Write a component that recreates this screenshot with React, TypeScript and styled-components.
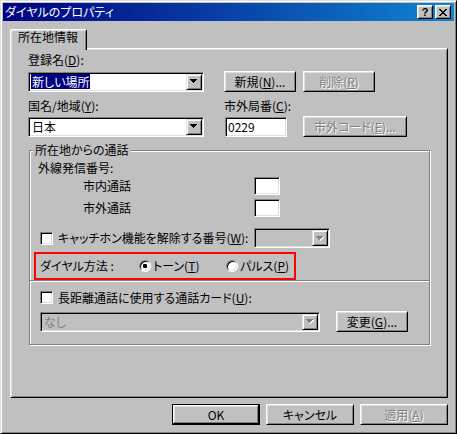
import React from 'react';
import styled, { createGlobalStyle, css } from 'styled-components';

const GlobalStyle = createGlobalStyle`
  html, body { margin: 0; padding: 0; background: #c0c0c0; }
  * { box-sizing: border-box; }
  body {
    font-family: "Noto Sans CJK JP", "Noto Sans", sans-serif;
    font-size: 12px;
    line-height: 14px;
    font-feature-settings: "palt";
  }
  u { text-decoration-thickness: 1px; text-underline-offset: 1px; }
`;

const Window = styled.div`
  width: 457px;
  height: 434px;
  background: #c0c0c0;
  border: 1px solid;
  border-color: #dfdfdf #000 #000 #dfdfdf;
  box-shadow: inset 1px 1px #fff, inset -1px -1px #808080;
  padding: 2px;
  display: flex;
  flex-direction: column;
  color: #000;
`;

const TitleBar = styled.div`
  height: 18px;
  flex: none;
  display: flex;
  align-items: center;
  padding: 0 3px 0 2px;
  background: linear-gradient(90deg, #000080 0%, #1084d0 100%);
`;

const TitleText = styled.span`
  flex: 1;
  color: #fff;
  font-size: 12px;
  line-height: 14px;
  white-space: nowrap;
`;

const CaptionButtons = styled.div`
  display: flex;
  gap: 2px;
`;

const CaptionButton = styled.div`
  width: 16px;
  height: 14px;
  background: #c0c0c0;
  border: 1px solid;
  border-color: #fff #000 #000 #fff;
  box-shadow: inset 1px 1px #dfdfdf, inset -1px -1px #808080;
  display: flex;
  align-items: center;
  justify-content: center;
  font-family: "Liberation Sans", Arial, sans-serif;
  font-weight: bold;
  font-size: 11px;
  line-height: 11px;
  color: #000;
`;

const Body = styled.div`
  flex: 1;
  display: flex;
  flex-direction: column;
  padding: 8px 6px 0 7px;
`;

const TabStrip = styled.div`
  display: flex;
`;

const Tab = styled.div`
  position: relative;
  z-index: 1;
  width: 77px;
  height: 21px;
  margin-bottom: -2px;
  background: #c0c0c0;
  border-top: 1px solid #fff;
  border-left: 1px solid #fff;
  border-right: 1px solid #000;
  border-radius: 2px 2px 0 0;
  box-shadow: inset 1px 1px #dfdfdf, inset -1px 0 #808080;
  padding: 0 0 0 7px;
  white-space: nowrap;
`;

const Panel = styled.div`
  width: 438px;
  height: 350px;
  border: 1px solid;
  border-color: #fff #000 #000 #fff;
  box-shadow: inset 1px 1px #dfdfdf, inset -1px -1px #808080;
  padding: 4px 0 0 17px;
  display: flex;
  flex-direction: column;
`;

const Row = styled.div<{ $mt?: number; $ml?: number; $h?: number; $gap?: number; $pl?: number }>`
  display: flex;
  align-items: center;
  flex: none;
  margin-top: ${(p) => p.$mt ?? 0}px;
  margin-left: ${(p) => p.$ml ?? 0}px;
  padding-left: ${(p) => p.$pl ?? 0}px;
  height: ${(p) => (p.$h ? `${p.$h}px` : 'auto')};
  gap: ${(p) => p.$gap ?? 0}px;
`;

const Label = styled.span<{ $w?: number; $disabled?: boolean }>`
  flex: none;
  white-space: nowrap;
  line-height: 14px;
  ${(p) => p.$w !== undefined && css`width: ${p.$w}px;`}
  ${(p) =>
    p.$disabled &&
    css`
      color: #808080;
      text-shadow: 1px 1px 0 #fff;
    `}
`;

const sunken = css`
  border: 1px solid;
  border-color: #808080 #fff #fff #808080;
  box-shadow: inset 1px 1px #000, inset -1px -1px #dfdfdf;
`;

const ComboBox = styled.div<{ $w: number; $disabled?: boolean }>`
  ${sunken};
  width: ${(p) => p.$w}px;
  height: 20px;
  flex: none;
  padding: 1px;
  display: flex;
  align-items: stretch;
  background: ${(p) => (p.$disabled ? '#c0c0c0' : '#fff')};
`;

const ComboValue = styled.div<{ $disabled?: boolean }>`
  flex: 1;
  display: flex;
  align-items: center;
  padding-left: 1px;
  white-space: nowrap;
  overflow: hidden;
  color: ${(p) => (p.$disabled ? '#808080' : '#000')};
`;

const Selected = styled.span`
  background: #000080;
  color: #fff;
  padding: 0 1px;
  line-height: 15px;
`;

const Plain = styled.span`
  padding: 0 1px;
`;

const DropButton = styled.div`
  width: 16px;
  flex: none;
  background: #c0c0c0;
  border: 1px solid;
  border-color: #dfdfdf #000 #000 #dfdfdf;
  box-shadow: inset 1px 1px #fff, inset -1px -1px #808080;
  display: flex;
  align-items: center;
  justify-content: center;
`;

const TextField = styled.div<{ $w: number; $h: number }>`
  ${sunken};
  width: ${(p) => p.$w}px;
  height: ${(p) => p.$h}px;
  flex: none;
  background: #fff;
  padding: 0 2px;
  display: flex;
  align-items: center;
  font-family: "Noto Sans CJK JP", "Noto Sans", sans-serif;
`;

const PushButton = styled.button<{ $w: number; $default?: boolean }>`
  width: ${(p) => p.$w}px;
  height: 21px;
  flex: none;
  margin: 0;
  padding: 0;
  font: inherit;
  font-feature-settings: "palt";
  color: #000;
  background: #c0c0c0;
  border: 1px solid;
  border-color: #fff #000 #000 #fff;
  box-shadow: inset 1px 1px #dfdfdf, inset -1px -1px #808080;
  display: flex;
  align-items: center;
  justify-content: center;
  white-space: nowrap;
  &:disabled {
    color: #808080;
    text-shadow: 1px 1px 0 #fff;
  }
  ${(p) =>
    p.$default &&
    css`
      border-color: #000;
      box-shadow: inset -1px -1px #000, inset 1px 1px #fff, inset -2px -2px #808080, inset 2px 2px #dfdfdf;
    `}
`;

const GroupBox = styled.div`
  margin: 13px 0 0 1px;
  width: 401px;
  height: 195px;
  border: 1px solid #808080;
  box-shadow: 1px 1px 0 #fff, inset 1px 1px 0 #fff;
  display: flex;
  flex-direction: column;
`;

const GroupTitle = styled.span`
  align-self: flex-start;
  margin: -8px 0 0 3px;
  padding: 0 2px;
  background: #c0c0c0;
  line-height: 14px;
  white-space: nowrap;
`;

const Separator = styled.div`
  height: 2px;
  flex: none;
  border-top: 1px solid #808080;
  border-bottom: 1px solid #fff;
`;

const CheckBox = styled.span`
  ${sunken};
  width: 13px;
  height: 13px;
  flex: none;
  background: #fff;
`;

const Highlight = styled.div`
  margin: 4px 0 0 4px;
  width: 262px;
  height: 28px;
  flex: none;
  border: 2px solid #ff0000;
  padding-left: 4px;
  display: flex;
  align-items: center;
`;

const RadioOption = styled.label<{ $w?: number }>`
  display: flex;
  align-items: center;
  gap: 2px;
  flex: none;
  ${(p) => p.$w !== undefined && css`width: ${p.$w}px;`}
`;

const RadioCircle = styled.span`
  width: 12px;
  height: 12px;
  flex: none;
  border-radius: 50%;
  border: 1px solid;
  border-color: #808080 #fff #fff #808080;
  box-shadow: inset 1px 1px #000, inset -1px -1px #dfdfdf;
  background: #fff;
  display: flex;
  align-items: center;
  justify-content: center;
`;

const RadioDot = styled.span`
  width: 4px;
  height: 4px;
  border-radius: 1px;
  background: #000;
`;

const ButtonBar = styled.div`
  display: flex;
  justify-content: flex-end;
  gap: 6px;
  margin-top: 6px;
`;

const Arrow: React.FC<{ disabled?: boolean }> = ({ disabled }) => (
  <svg width="8" height="5" viewBox="0 0 8 5" shapeRendering="crispEdges">
    {disabled && <path d="M1 1h7v1h-1v1h-1v1h-1v1h-1v-1h-1v-1h-1v-1h-1z" fill="#fff" />}
    <path d="M0 0h7v1h-1v1h-1v1h-1v1h-1v-1h-1v-1h-1v-1h-1z" fill={disabled ? '#808080' : '#000'} />
  </svg>
);

const CloseGlyph = () => (
  <svg width="8" height="7" viewBox="0 0 8 7" shapeRendering="crispEdges">
    <path
      fill="#000"
      d="M0 0h2v1h-2zM6 0h2v1h-2zM1 1h2v1h-2zM5 1h2v1h-2zM2 2h4v1h-4zM3 3h2v1h-2zM2 4h4v1h-4zM1 5h2v1h-2zM5 5h2v1h-2zM0 6h2v1h-2zM6 6h2v1h-2z"
    />
  </svg>
);

const Combo: React.FC<{ w: number; disabled?: boolean; children?: React.ReactNode }> = ({ w, disabled, children }) => (
  <ComboBox $w={w} $disabled={disabled}>
    <ComboValue $disabled={disabled}>{children}</ComboValue>
    <DropButton>
      <Arrow disabled={disabled} />
    </DropButton>
  </ComboBox>
);

export default function App() {
  return (
    <>
      <GlobalStyle />
      <Window>
        <TitleBar>
          <TitleText>ダイヤルのプロパティ</TitleText>
          <CaptionButtons>
            <CaptionButton>?</CaptionButton>
            <CaptionButton>
              <CloseGlyph />
            </CaptionButton>
          </CaptionButtons>
        </TitleBar>
        <Body>
          <TabStrip>
            <Tab>所在地情報</Tab>
          </TabStrip>
          <Panel>
            <Row>
              <Label>
                登録名(<u>D</u>):
              </Label>
            </Row>
            <Row $mt={4} $h={21} $gap={20}>
              <Combo w={176}>
                <Selected>新しい場所</Selected>
              </Combo>
              <Row $gap={7}>
                <PushButton $w={72}>
                  新規(<u>N</u>)...
                </PushButton>
                <PushButton $w={72} disabled>
                  削除(<u>R</u>)
                </PushButton>
              </Row>
            </Row>
            <Row $mt={7} $gap={20}>
              <Label $w={176}>
                国名/地域(<u>Y</u>):
              </Label>
              <Label>
                市外局番(<u>C</u>):
              </Label>
            </Row>
            <Row $mt={3} $h={21} $gap={20}>
              <Combo w={176}>
                <Plain>日本</Plain>
              </Combo>
              <Row $gap={16} $pl={1}>
                <TextField $w={62} $h={20}>0229</TextField>
                <PushButton $w={104} disabled>
                  市外コード(<u>E</u>)...
                </PushButton>
              </Row>
            </Row>
            <GroupBox>
              <GroupTitle>所在地からの通話</GroupTitle>
              <Row $mt={4} $ml={8}>
                <Label>外線発信番号:</Label>
              </Row>
              <Row $mt={2} $ml={53} $h={18}>
                <Label $w={171}>市内通話</Label>
                <TextField $w={26} $h={18} />
              </Row>
              <Row $mt={4} $ml={53} $h={18}>
                <Label $w={171}>市外通話</Label>
                <TextField $w={26} $h={18} />
              </Row>
              <Row $mt={11} $ml={10} $h={20}>
                <CheckBox />
                <Label $w={196} style={{ marginLeft: 5 }}>
                  キャッチホン機能を解除する番号(<u>W</u>):
                </Label>
                <Combo w={76} disabled />
              </Row>
              <Highlight>
                <Label $w={99}>ダイヤル方法 :</Label>
                <RadioOption $w={87}>
                  <RadioCircle>
                    <RadioDot />
                  </RadioCircle>
                  <span>
                    トーン(<u>T</u>)
                  </span>
                </RadioOption>
                <RadioOption>
                  <RadioCircle />
                  <span>
                    パルス(<u>P</u>)
                  </span>
                </RadioOption>
              </Highlight>
              <Separator />
              <Row $mt={9} $ml={10} $h={13} $gap={5}>
                <CheckBox />
                <Label>
                  長距離通話に使用する通話カード(<u>U</u>):
                </Label>
              </Row>
              <Row $mt={7} $ml={10} $h={21} $gap={16}>
                <Combo w={280} disabled>
                  <Plain>なし</Plain>
                </Combo>
                <PushButton $w={72}>
                  変更(<u>G</u>)...
                </PushButton>
              </Row>
            </GroupBox>
          </Panel>
          <ButtonBar>
            <PushButton $w={88} $default>
              OK
            </PushButton>
            <PushButton $w={88}>キャンセル</PushButton>
            <PushButton $w={88} disabled>
              適用(<u>A</u>)
            </PushButton>
          </ButtonBar>
        </Body>
      </Window>
    </>
  );
}
